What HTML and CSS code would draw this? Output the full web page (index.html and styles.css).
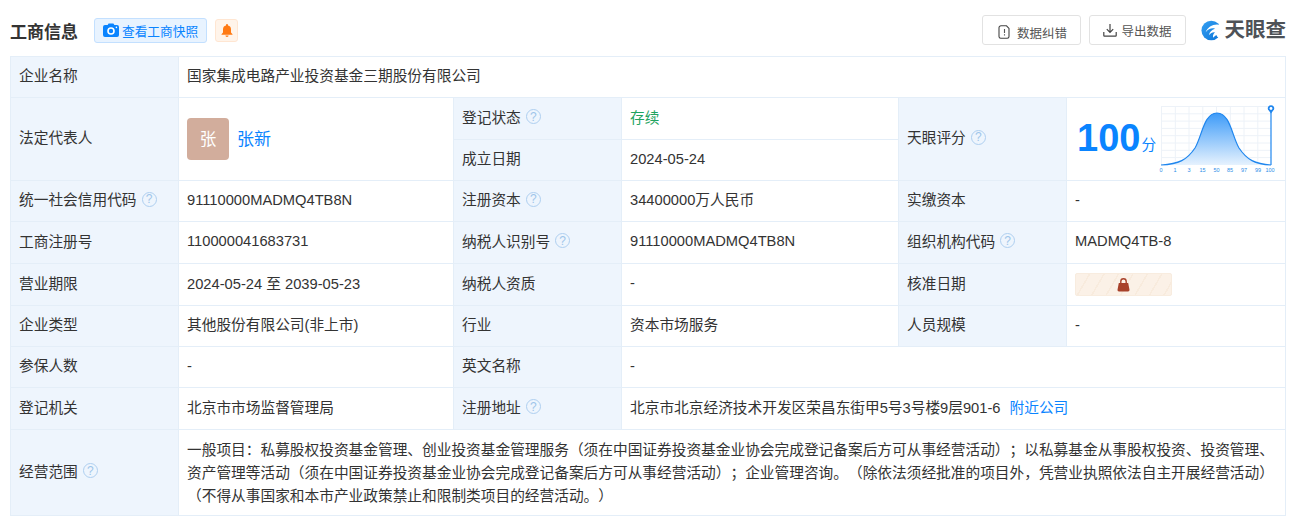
FILE: index.html
```html
<!DOCTYPE html>
<html lang="zh-CN">
<head>
<meta charset="utf-8">
<title>工商信息</title>
<link rel="stylesheet" href="styles.css">
</head>
<body>
<header class="head">
  <h2 class="title">工商信息</h2>
  <a class="chip">
    <svg class="chip-ic" viewBox="0 0 16 14" width="16" height="14"><path fill="#0a84ff" d="M2 2h2.600L5.600.4h4.800L11.400 2H14a2 2 0 0 1 2 2v8a2 2 0 0 1-2 2H2a2 2 0 0 1-2-2V4a2 2 0 0 1 2-2z"/><circle cx="8" cy="8" r="3" fill="none" stroke="#fff" stroke-width="1.600"/><circle cx="13.400" cy="4.400" r=".8" fill="#fff"/></svg>
    查看工商快照
  </a>
  <span class="bell">
    <svg viewBox="0 0 12 13" width="12" height="13"><path fill="#ff7a14" d="M6 0a1 1 0 0 1 1 1v.6A4 4 0 0 1 10 5.500V8.500l1.500 1.700v.5H.5v-.5L2 8.500v-3A4 4 0 0 1 5 1.600V1a1 1 0 0 1 1-1z"/><path fill="#ff7a14" d="M4.400 11.500h3.200a1.600 1.500 0 0 1-3.200 0z"/></svg>
  </span>
  <span class="spacer"></span>
  <a class="btn btn-a">
    <svg viewBox="0 0 12 14" width="12" height="14"><path fill="none" stroke="#444" stroke-width="1.100" d="M3 .8h5.500L11 3.500v8a1.700 1.700 0 0 1-1.700 1.700H2.700A1.700 1.700 0 0 1 1 11.500V2.800A2 2 0 0 1 3 .8z"/><path stroke="#555" stroke-width="1.100" d="M6.500 4v4M6.500 9.200v1.200"/></svg>
    数据纠错
  </a>
  <a class="btn btn-b">
    <svg viewBox="0 0 14 14" width="14" height="14"><path fill="none" stroke="#444" stroke-width="1.200" d="M7 1v8M3.800 6.200 7 9.400l3.200-3.200M.8 9v3.600a.6.6 0 0 0 .6.6h11.200a.6.6 0 0 0 .6-.6V9"/></svg>
    导出数据
  </a>
  <span class="logo">
    <svg viewBox="0 0 22 22" width="21" height="21"><defs><linearGradient id="lg" x1="0" y1="0" x2="1" y2="1"><stop offset="0" stop-color="#35a0f2"/><stop offset="1" stop-color="#0b74d8"/></linearGradient></defs><circle cx="11" cy="11" r="10.500" fill="url(#lg)"/><path fill="#fff" d="M22 5.500C15 3 7.500 6 5 13c2.500-3.500 6.500-5 10-4-3.500 1-6 3.500-6.500 7 2-2.500 4.300-3.500 6.500-3-1.800 1.500-2.500 3.500-2 5.800 1-1.500 2.300-2.500 3.800-2.800.5 1.500 1.200 2.500 2.200 3l3-5z"/></svg>
    <span class="logo-text">天眼查</span>
  </span>
</header>

<table class="info">
  <colgroup><col class="c1"><col class="c2"><col class="c3"><col class="c4"><col class="c5"><col class="c6"></colgroup>
  <tbody>
    <tr class="h41"><th>企业名称</th><td colspan="5">国家集成电路产业投资基金三期股份有限公司</td></tr>
    <tr class="h42">
      <th rowspan="2">法定代表人</th>
      <td rowspan="2" class="flush"><div class="person"><span class="avatar">张</span><a class="link name">张新</a></div></td>
      <th>登记状态<i class="q">?</i></th>
      <td class="ok">存续</td>
      <th rowspan="2">天眼评分<i class="q">?</i></th>
      <td rowspan="2" class="score-cell">
        <div class="score">
          <span class="num">100</span><span class="unit">分</span>
          <svg class="chart" viewBox="-3 0 118 70" width="118" height="70">
            <defs><linearGradient id="bell" x1="0" y1="0" x2="0" y2="1"><stop offset="0" stop-color="#3d9bf8"/><stop offset="1" stop-color="#e6f2fe"/></linearGradient></defs>
            <path fill="none" stroke="#edf2f8" d="M0.500 2V61M14.300 2V61M28 2V61M41.800 2V61M55.500 2V61M69.300 2V61M83 2V61M96.800 2V61M.5 2.500H110M.5 9.800H110M.5 17.100H110M.5 24.400H110M.5 31.700H110M.5 39H110M.5 46.300H110M.5 53.600H110"/>
            <path fill="url(#bell)" d="M0 61C18 60 26 56 34 44 41 32 43 9 56 9 69 9 71 32 78 44 86 56 94 60 110 61z"/>
            <path fill="none" stroke="#1f86ee" stroke-width="1.200" d="M0 61C18 60 26 56 34 44 41 32 43 9 56 9 69 9 71 32 78 44 86 56 94 60 110 61"/>
            <path stroke="#1f86ee" stroke-width="1.200" d="M110 6V61"/>
            <path fill="#1f86ee" d="M110 9.500 107 5.500a3.200 3.200 0 1 1 6 0z"/>
            <circle cx="110" cy="4.500" r="1.400" fill="#fff"/>
            <g class="ticks"><text x="0" y="68">0</text><text x="14" y="68">1</text><text x="28" y="68">3</text><text x="41.500" y="68">15</text><text x="55.500" y="68">50</text><text x="69" y="68">85</text><text x="83" y="68">97</text><text x="97" y="68">99</text><text x="109" y="68">100</text></g>
          </svg>
        </div>
      </td>
    </tr>
    <tr class="h41"><th>成立日期</th><td class="lat">2024-05-24</td></tr>
    <tr class="h41"><th>统一社会信用代码<i class="q">?</i></th><td class="lat">91110000MADMQ4TB8N</td><th>注册资本<i class="q">?</i></th><td>34400000万人民币</td><th>实缴资本</th><td class="lat">-</td></tr>
    <tr class="h42"><th>工商注册号</th><td class="lat">110000041683731</td><th>纳税人识别号<i class="q">?</i></th><td class="lat">91110000MADMQ4TB8N</td><th>组织机构代码<i class="q">?</i></th><td class="lat">MADMQ4TB-8</td></tr>
    <tr class="h42"><th>营业期限</th><td>2024-05-24 至 2039-05-23</td><th>纳税人资质</th><td class="lat">-</td><th>核准日期</th><td class="flush"><span class="locked"><svg viewBox="0 0 13 14" width="13" height="14"><path fill="none" stroke="#a8412a" stroke-width="1.400" d="M3.800 6V3.500a2.700 2.700 0 0 1 5.400 0V6"/><path fill="#a8412a" d="M1.800 5h9.400l1.300 6.800a1.500 1.500 0 0 1-1.500 1.700H2A1.500 1.500 0 0 1 .5 11.800z"/></svg></span></td></tr>
    <tr class="h41"><th>企业类型</th><td>其他股份有限公司(非上市)</td><th>行业</th><td>资本市场服务</td><th>人员规模</th><td class="lat">-</td></tr>
    <tr class="h41"><th>参保人数</th><td class="lat">-</td><th>英文名称</th><td colspan="3" class="lat">-</td></tr>
    <tr class="h42"><th>登记机关</th><td>北京市市场监督管理局</td><th>注册地址<i class="q">?</i></th><td colspan="3">北京市北京经济技术开发区荣昌东街甲5号3号楼9层901-6<a class="link near">附近公司</a></td></tr>
    <tr class="h86"><th>经营范围<i class="q">?</i></th><td colspan="5" class="scope">一般项目：私募股权投资基金管理、创业投资基金管理服务（须在中国证券投资基金业协会完成登记备案后方可从事经营活动）；以私募基金从事股权投资、投资管理、资产管理等活动（须在中国证券投资基金业协会完成登记备案后方可从事经营活动）；企业管理咨询。（除依法须经批准的项目外，凭营业执照依法自主开展经营活动）（不得从事国家和本市产业政策禁止和限制类项目的经营活动。）</td></tr>
  </tbody>
</table>
</body>
</html>
```

FILE: styles.css
```css
* { box-sizing: border-box; }
html, body { margin: 0; background: #fff; }
body {
  padding: 0 5px 0 10px;
  font-family: "Liberation Sans", "Noto Sans CJK SC", sans-serif;
  font-size: 14.700px;
  color: #333;
  text-spacing-trim: space-all;
  font-feature-settings: "chws" 0, "halt" 0, "palt" 0;
}
.head { display: flex; align-items: center; height: 56px; padding-top: 4px; }
.title { margin: 0 16px 0 0; font-size: 17px; font-weight: 700; color: #333; }
.chip {
  display: flex; align-items: center; gap: 3px;
  width: 113px; height: 25px; padding-left: 8px;
  background: #e8f3ff; border: 1px solid #c3e0ff; border-radius: 3px;
  font-size: 12.700px; color: #0a84ff;
}
.bell {
  display: flex; align-items: center; justify-content: center;
  width: 23px; height: 23px; margin-left: 8px;
  background: #fff4ea; border: 1px solid #ffe6d2; border-radius: 3px;
}
.spacer { flex: 1; }
.btn {
  display: flex; align-items: center; justify-content: center;
  height: 30px; border: 1px solid #e2e2e2; border-radius: 3px;
  font-size: 12.500px; color: #555;
}
.btn-a { width: 99px; gap: 7px; padding: 4px 0 0 2px; }
.btn-b { width: 97px; margin-left: 8px; gap: 4px; }
.logo { display: flex; align-items: center; gap: 3px; width: 85px; margin-left: 15px; }
.logo-text { font-size: 20.500px; font-weight: 700; color: #4e5257; white-space: nowrap; line-height: 1; }

.info { border-collapse: collapse; table-layout: fixed; width: 1275px; }
.c1, .c3, .c5 { width: 168px; }
.c2 { width: 275px; }
.c4 { width: 277px; }
.c6 { width: 219px; }
.h41 { height: 41px; }
.h42 { height: 42px; }
.h86 { height: 86px; }
th, td {
  border: 1px solid #e4eef8;
  padding: 0 8px 5px;
  text-align: left;
  font-weight: 400;
  vertical-align: middle;
}
th { background: #eef5fd; }
td.flush { padding-bottom: 0; }
td.lat { padding-bottom: 3px; }
.q {
  display: inline-flex; align-items: center; justify-content: center;
  width: 15px; height: 15px; margin-left: 5px;
  border: 1.300px solid #aecff0; border-radius: 50%;
  font-style: normal; font-size: 12px; line-height: 1; color: #9fc5ea;
  vertical-align: 2px;
}
.link { color: #0a84ff; }
.ok { color: #1fa35f; }
.person { display: flex; align-items: center; gap: 8px; }
.avatar {
  display: flex; align-items: center; justify-content: center;
  width: 42px; height: 42px; border-radius: 4px; padding-bottom: 3px;
  background: #d2ad9c; color: #fff; font-size: 16.600px;
}
.name { font-size: 17px; padding-bottom: 3px; }
.score-cell { padding: 0 0 3px 10px; }
.score { display: flex; align-items: center; }
.num { font-size: 38px; font-weight: 700; color: #0a84ff; line-height: 1; }
.unit { font-size: 14.700px; color: #0a84ff; margin: 12px 2px 0 1px; }
.chart { display: block; margin-top: 2px; }
.ticks text { font-family: "Liberation Sans", sans-serif; font-size: 5.500px; fill: #2e8ee8; text-anchor: middle; }
.locked {
  display: flex; align-items: center; justify-content: center;
  width: 97px; height: 23px; border-radius: 2px;
  border: 1px solid #f8ecdf;
  background: repeating-linear-gradient(120deg, #fbf1e7 0 11px, #f8ebdd 11px 12.500px);
}
.near { margin-left: 9px; }
td.scope { line-height: 23px; padding: 2px 8px 0; }
```
